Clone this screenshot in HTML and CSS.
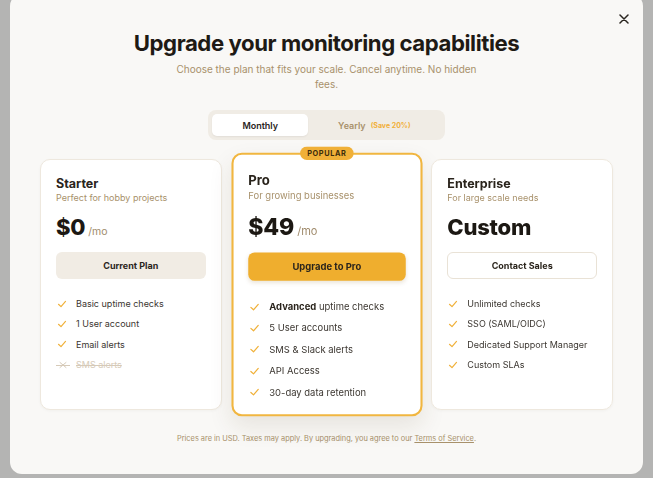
FILE: index.html
```html
<!DOCTYPE html>
<html lang="en">
<head>
<meta charset="utf-8">
<title>Upgrade</title>
<link rel="stylesheet" href="styles.css">
</head>
<body>
<div class="overlay">
  <div class="modal">
    <button class="close" aria-label="Close">
      <svg width="10" height="10" viewBox="0 0 10 10"><path d="M1 1L9 9M9 1L1 9" stroke="#2b2620" stroke-width="1.5" stroke-linecap="round"/></svg>
    </button>
    <h1 class="title">Upgrade your monitoring capabilities</h1>
    <p class="subtitle">Choose the plan that fits your scale. Cancel anytime. No hidden fees.</p>
    <div class="toggle-wrap">
      <div class="toggle">
        <span class="tg tg-active">Monthly</span>
        <span class="tg">Yearly <span class="save">(Save 20%)</span></span>
      </div>
    </div>
    <div class="plans">
      <div class="card">
        <div class="name">Starter</div>
        <div class="desc">Perfect for hobby projects</div>
        <div class="price"><span class="amount">$0</span><span class="per">/mo</span></div>
        <div class="btn btn-muted">Current Plan</div>
        <ul class="feats">
          <li><svg class="ck" viewBox="0 0 12 12"><path d="M2.5 6.3L5 8.6L9.5 3.4" fill="none" stroke="#f0b13a" stroke-width="1.2" stroke-linecap="round" stroke-linejoin="round"/></svg>Basic uptime checks</li>
          <li><svg class="ck" viewBox="0 0 12 12"><path d="M2.5 6.3L5 8.6L9.5 3.4" fill="none" stroke="#f0b13a" stroke-width="1.2" stroke-linecap="round" stroke-linejoin="round"/></svg>1 User account</li>
          <li><svg class="ck" viewBox="0 0 12 12"><path d="M2.5 6.3L5 8.6L9.5 3.4" fill="none" stroke="#f0b13a" stroke-width="1.2" stroke-linecap="round" stroke-linejoin="round"/></svg>Email alerts</li>
          <li class="off"><svg class="ck xo" viewBox="0 0 14 12"><path d="M4 3.5L10 8.5M10 3.5L4 8.5" fill="none" stroke="#d6cab8" stroke-width="1" stroke-linecap="round"/><path d="M0 6.5H14" stroke="#d6cab8" stroke-width="1"/></svg>SMS alerts</li>
        </ul>
      </div>
      <div class="card card-pro">
        <span class="badge">POPULAR</span>
        <div class="name">Pro</div>
        <div class="desc">For growing businesses</div>
        <div class="price"><span class="amount">$49</span><span class="per">/mo</span></div>
        <div class="btn btn-primary">Upgrade to Pro</div>
        <ul class="feats">
          <li><svg class="ck" viewBox="0 0 12 12"><path d="M2.5 6.3L5 8.6L9.5 3.4" fill="none" stroke="#f0b13a" stroke-width="1.2" stroke-linecap="round" stroke-linejoin="round"/></svg><span><b>Advanced</b> uptime checks</span></li>
          <li><svg class="ck" viewBox="0 0 12 12"><path d="M2.5 6.3L5 8.6L9.5 3.4" fill="none" stroke="#f0b13a" stroke-width="1.2" stroke-linecap="round" stroke-linejoin="round"/></svg>5 User accounts</li>
          <li><svg class="ck" viewBox="0 0 12 12"><path d="M2.5 6.3L5 8.6L9.5 3.4" fill="none" stroke="#f0b13a" stroke-width="1.2" stroke-linecap="round" stroke-linejoin="round"/></svg>SMS &amp; Slack alerts</li>
          <li><svg class="ck" viewBox="0 0 12 12"><path d="M2.5 6.3L5 8.6L9.5 3.4" fill="none" stroke="#f0b13a" stroke-width="1.2" stroke-linecap="round" stroke-linejoin="round"/></svg>API Access</li>
          <li><svg class="ck" viewBox="0 0 12 12"><path d="M2.5 6.3L5 8.6L9.5 3.4" fill="none" stroke="#f0b13a" stroke-width="1.2" stroke-linecap="round" stroke-linejoin="round"/></svg>30-day data retention</li>
        </ul>
      </div>
      <div class="card">
        <div class="name">Enterprise</div>
        <div class="desc">For large scale needs</div>
        <div class="price"><span class="amount">Custom</span></div>
        <div class="btn btn-outline">Contact Sales</div>
        <ul class="feats">
          <li><svg class="ck" viewBox="0 0 12 12"><path d="M2.5 6.3L5 8.6L9.5 3.4" fill="none" stroke="#f0b13a" stroke-width="1.2" stroke-linecap="round" stroke-linejoin="round"/></svg>Unlimited checks</li>
          <li><svg class="ck" viewBox="0 0 12 12"><path d="M2.5 6.3L5 8.6L9.5 3.4" fill="none" stroke="#f0b13a" stroke-width="1.2" stroke-linecap="round" stroke-linejoin="round"/></svg>SSO (SAML/OIDC)</li>
          <li><svg class="ck" viewBox="0 0 12 12"><path d="M2.5 6.3L5 8.6L9.5 3.4" fill="none" stroke="#f0b13a" stroke-width="1.2" stroke-linecap="round" stroke-linejoin="round"/></svg>Dedicated Support Manager</li>
          <li><svg class="ck" viewBox="0 0 12 12"><path d="M2.5 6.3L5 8.6L9.5 3.4" fill="none" stroke="#f0b13a" stroke-width="1.2" stroke-linecap="round" stroke-linejoin="round"/></svg>Custom SLAs</li>
        </ul>
      </div>
    </div>
    <p class="footer">Prices are in USD. Taxes may apply. By upgrading, you agree to our <a href="#">Terms of Service</a>.</p>
  </div>
</div>
</body>
</html>
```

FILE: styles.css
```css
* { box-sizing: border-box; }
html, body { margin: 0; padding: 0; }
body {
  background: #b4b4b3;
  font-family: Inter, "Noto Sans", sans-serif;
  overflow: hidden;
  height: 478px;
}
.overlay { padding: 0 10px; }
.modal {
  position: relative;
  margin-top: -6px;
  height: 480px;
  background: #f9f8f6;
  border-radius: 12px;
  padding: 35px 30px 0;
}
.close {
  position: absolute;
  top: 19px;
  right: 13px;
  width: 12px;
  height: 12px;
  padding: 1px;
  border: 0;
  background: none;
  display: flex;
}
.title {
  margin: 0;
  text-align: center;
  font-size: 22.2px;
  line-height: 28px;
  font-weight: 700;
  letter-spacing: -0.02em;
  color: #1e1a15;
}
.subtitle {
  margin: 5px auto 0;
  max-width: 312px;
  text-align: center;
  font-size: 10px;
  line-height: 15px;
  color: #a8916b;
}
.toggle-wrap { display: flex; justify-content: center; margin-top: 18px; }
.toggle {
  display: flex;
  padding: 4px;
  background: #f0ece5;
  border-radius: 8px;
}
.tg {
  height: 22px;
  padding: 0 30px;
  display: flex;
  align-items: center;
  font-size: 9px;
  font-weight: 600;
  color: #a8916b;
  border-radius: 5px;
}
.tg-active {
  background: #fff;
  color: #2a241c;
  box-shadow: 0 1px 2px rgba(0,0,0,0.06);
}
.save {
  margin-left: 5px;
  font-size: 7px;
  font-weight: 700;
  color: #f0b03a;
}
.plans {
  margin-top: 19px;
  display: grid;
  grid-template-columns: 1fr 1fr 1fr;
  gap: 14px;
}
.card {
  position: relative;
  background: #fff;
  border: 1px solid #eee8de;
  border-radius: 10px;
  padding: 16px 15px 16px;
  box-shadow: 0 1px 3px rgba(60,40,10,0.04);
}
.card-pro {
  border: 2px solid #f1b640;
  padding: 17px 14px 14px;
  transform: scale(1.05);
  box-shadow: 0 10px 22px rgba(80,60,20,0.10);
}
.badge {
  position: absolute;
  top: -8px;
  left: 50%;
  transform: translateX(-50%);
  background: #f0b038;
  color: #3d2c0c;
  font-size: 7px;
  font-weight: 700;
  letter-spacing: 0.08em;
  line-height: 13px;
  padding: 0 7px;
  border-radius: 8px;
}
.name {
  font-size: 12.5px;
  line-height: 16px;
  font-weight: 700;
  color: #2a241c;
}
.desc {
  font-size: 9px;
  line-height: 12px;
  color: #a8916b;
}
.price {
  margin-top: 9px;
  display: flex;
  align-items: baseline;
  height: 28px;
  line-height: 28px;
}
.amount {
  font-size: 22px;
  font-weight: 800;
  color: #1c1813;
  letter-spacing: -0.01em;
}
.per {
  margin-left: 3px;
  font-size: 10.5px;
  line-height: 12px;
  color: #a08b6c;
}
.btn {
  margin-top: 11px;
  height: 27px;
  border-radius: 6px;
  display: flex;
  align-items: center;
  justify-content: center;
  font-size: 9px;
  font-weight: 700;
  color: #2a241c;
}
.btn-muted { background: #f1ece4; }
.btn-primary {
  background: #efae2e;
  box-shadow: 0 2px 4px rgba(120,80,10,0.15);
}
.btn-outline { background: #fff; border: 1px solid #e9e2d6; }
.feats {
  list-style: none;
  margin: 18px 0 0;
  padding: 0;
  display: flex;
  flex-direction: column;
  gap: 7.4px;
}
.feats li {
  display: flex;
  align-items: center;
  gap: 8px;
  font-size: 9px;
  line-height: 13px;
  color: #3b3630;
}
.feats b { font-weight: 700; color: #2a241c; }
.ck { width: 12px; height: 12px; flex: none; }
.xo { width: 14px; margin-right: -2px; }
.feats li.off { color: #d6cab8; text-decoration: line-through; }
.footer {
  margin: 24px 0 0;
  text-align: center;
  font-size: 7.4px;
  line-height: 10px;
  color: #a8916b;
}
.footer a { color: #a8916b; text-decoration: underline; }
```
